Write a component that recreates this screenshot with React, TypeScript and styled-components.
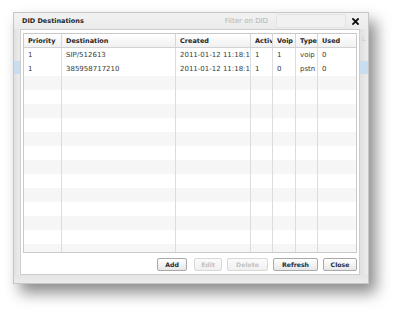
import React from "react";
import styled, { createGlobalStyle } from "styled-components";

const GlobalStyle = createGlobalStyle`
  html, body { margin: 0; padding: 0; background: #ffffff; }
  body { font-family: "DejaVu Sans", Verdana, sans-serif; }
`;

const Stage = styled.div`
  width: 400px;
  height: 314px;
  box-sizing: border-box;
  padding: 12px 0 0 13px;
  background: #ffffff;
  overflow: hidden;
`;

const Window = styled.div`
  width: 356px;
  height: 272px;
  box-sizing: border-box;
  border: 1px solid #c6c6c6;
  background: #e8e8e8;
  box-shadow: 7px 9px 14px rgba(0, 0, 0, 0.45);
  display: flex;
  flex-direction: column;
`;

const Header = styled.div`
  height: 16px;
  display: flex;
  align-items: center;
  padding: 0 9px 0 8px;
  background: linear-gradient(#f2f2f2, #ebebeb);
`;

const Title = styled.div`
  font-size: 6.5px;
  font-weight: bold;
  color: #262626;
  flex: 1;
`;

const FilterLabel = styled.div`
  font-size: 7px;
  color: #b4b4b4;
  margin-right: 8px;
`;

const FilterInput = styled.div`
  width: 68px;
  height: 12px;
  background: #f1f1f1;
  border: 1px solid #e3e3e3;
`;

const CloseIcon = styled.svg`
  width: 7px;
  height: 7px;
  margin-left: 6px;
  display: block;
`;

const Body = styled.div`
  flex: 1;
  display: flex;
`;

const SideStrip = styled.div<{ $w: number }>`
  width: ${(p) => p.$w}px;
  display: flex;
  flex-direction: column;
  background: linear-gradient(90deg, #e0e0e0, #ececec);
`;

const StripTop = styled.div<{ $h: number }>`
  height: ${(p) => p.$h}px;
  font-size: 6px;
  color: #c4c4c4;
  padding: 6px 0 0 2px;
  box-sizing: border-box;
`;

const StripSelected = styled.div`
  height: 13px;
  background: #c9ddf0;
`;

const Panel = styled.div`
  width: 340px;
  box-sizing: border-box;
  background: #ffffff;
  border: 1px solid #cdcdcd;
  padding: 3px 2px 0 2px;
  display: flex;
  flex-direction: column;
`;

const Grid = styled.div`
  height: 220px;
  box-sizing: border-box;
  border: 1px solid #c9c9c9;
  display: flex;
  flex-direction: column;
  overflow: hidden;
`;

const cols = "38px 114px 75px 22px 23px 22px 1fr";

const HeadRow = styled.div`
  display: grid;
  grid-template-columns: ${cols};
  height: 14px;
  box-sizing: border-box;
  border-bottom: 1px solid #d2d2d2;
  background: linear-gradient(#ffffff, #f1f1f1);
`;

const HeadCell = styled.div<{ $last?: boolean }>`
  font-size: 6.5px;
  font-weight: bold;
  color: #262626;
  padding-left: 4px;
  display: flex;
  align-items: center;
  white-space: nowrap;
  overflow: hidden;
  border-right: ${(p) => (p.$last ? "none" : "1px solid #d6d6d6")};
`;

const Rows = styled.div`
  flex: 1;
  overflow: hidden;
`;

const Row = styled.div<{ $striped: boolean }>`
  display: grid;
  grid-template-columns: ${cols};
  height: 14px;
  background: ${(p) => (p.$striped ? "#f6f6f6" : "#ffffff")};
`;

const Cell = styled.div<{ $last?: boolean }>`
  font-size: 7px;
  color: #3a3a3a;
  padding-left: 4px;
  display: flex;
  align-items: center;
  white-space: nowrap;
  overflow: hidden;
  border-right: ${(p) => (p.$last ? "none" : "1px solid #dcdcdc")};
`;

const Toolbar = styled.div`
  height: 20px;
  display: flex;
  justify-content: flex-end;
  align-items: flex-start;
  padding-top: 5px;
  box-sizing: border-box;
  gap: 5px;
`;

const Button = styled.div<{ $w: number; $disabled?: boolean; $gap?: number }>`
  width: ${(p) => p.$w}px;
  height: 13px;
  box-sizing: border-box;
  margin-right: ${(p) => p.$gap ?? 0}px;
  border: 1px solid ${(p) => (p.$disabled ? "#d8d8d8" : "#a9a9a9")};
  border-radius: 2px;
  background: ${(p) =>
    p.$disabled ? "linear-gradient(#fbfbfb, #f0f0f0)" : "linear-gradient(#ffffff, #e6e6e6)"};
  font-size: 6.2px;
  font-weight: bold;
  color: ${(p) => (p.$disabled ? "#c2c2c2" : "#1d2b38")};
  display: flex;
  align-items: center;
  justify-content: center;
`;

const BottomStrip = styled.div`
  height: 8px;
  background: linear-gradient(#e4e4e4, #ececec);
`;

const columns = ["Priority", "Destination", "Created", "Activ", "Voip", "Type", "Used"];

const data: string[][] = [
  ["1", "SIP/512613", "2011-01-12 11:18:1", "1", "1", "voip", "0"],
  ["1", "385958717210", "2011-01-12 11:18:1", "1", "0", "pstn", "0"],
];

const TOTAL_ROWS = 15;

export default function App() {
  const rows = Array.from({ length: TOTAL_ROWS }, (_, i) => data[i] ?? ["", "", "", "", "", "", ""]);
  return (
    <>
      <GlobalStyle />
      <Stage>
        <Window>
          <Header>
            <Title>DID Destinations</Title>
            <FilterLabel>Filter on DID</FilterLabel>
            <FilterInput />
            <CloseIcon viewBox="0 0 7 7">
              <path d="M1 1 L6 6 M6 1 L1 6" stroke="#111" strokeWidth="1.8" strokeLinecap="square" />
            </CloseIcon>
          </Header>
          <Body>
            <SideStrip $w={6}>
              <StripTop $h={32} />
              <StripSelected />
            </SideStrip>
            <Panel>
              <Grid>
                <HeadRow>
                  {columns.map((c, i) => (
                    <HeadCell key={c} $last={i === columns.length - 1}>
                      {c}
                    </HeadCell>
                  ))}
                </HeadRow>
                <Rows>
                  {rows.map((r, ri) => (
                    <Row key={ri} $striped={ri % 2 === 0 && ri > 1}>
                      {r.map((v, ci) => (
                        <Cell key={ci} $last={ci === r.length - 1}>
                          {v}
                        </Cell>
                      ))}
                    </Row>
                  ))}
                </Rows>
              </Grid>
              <Toolbar>
                <Button $w={30} $gap={2}>Add</Button>
                <Button $w={28} $disabled>Edit</Button>
                <Button $w={41} $disabled>Delete</Button>
                <Button $w={45}>Refresh</Button>
                <Button $w={34}>Close</Button>
              </Toolbar>
            </Panel>
            <SideStrip $w={8}>
              <StripTop $h={32}>L</StripTop>
              <StripSelected />
            </SideStrip>
          </Body>
          <BottomStrip />
        </Window>
      </Stage>
    </>
  );
}
